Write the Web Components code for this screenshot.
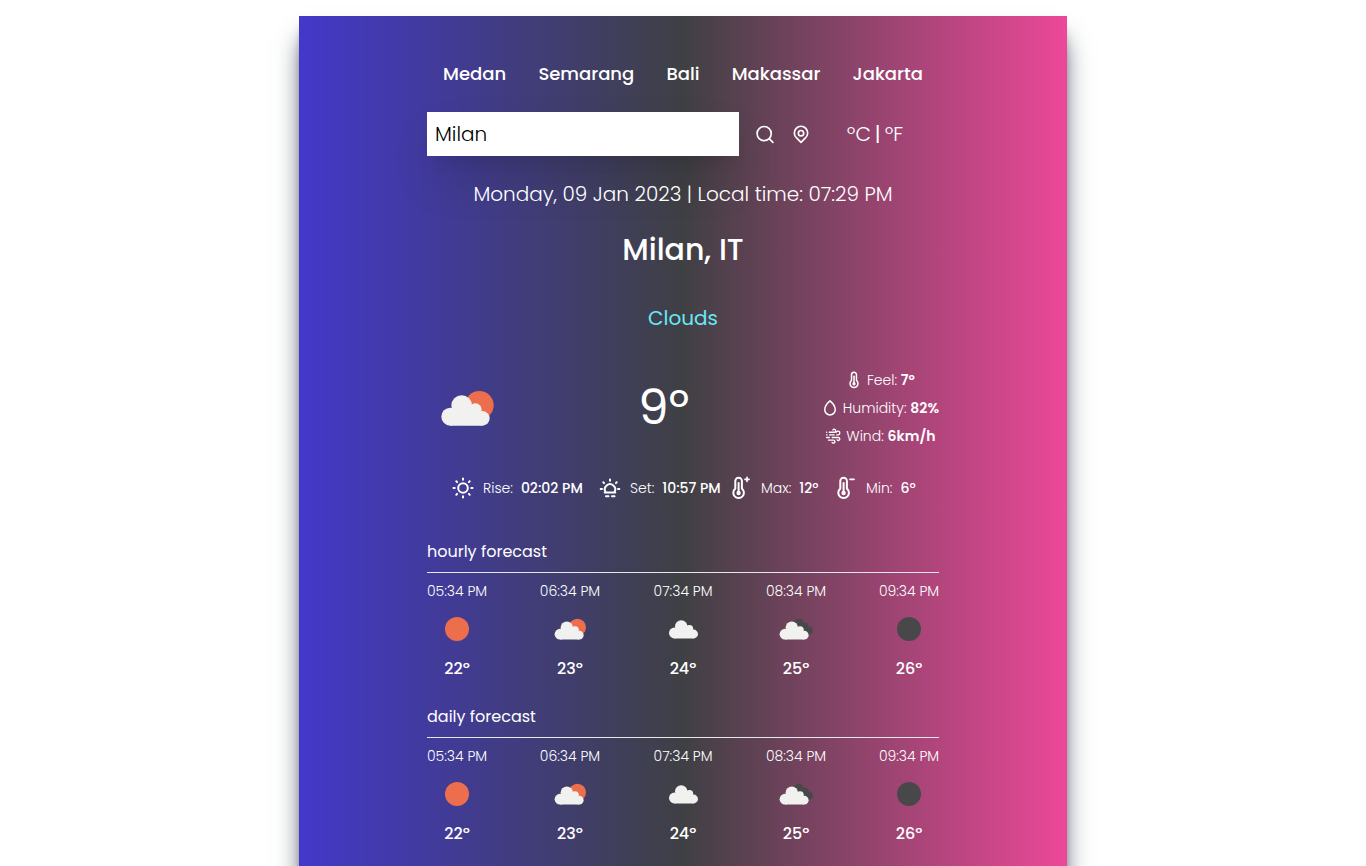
<!DOCTYPE html>
<html lang="en">
<head>
<meta charset="utf-8">
<meta name="viewport" content="width=device-width, initial-scale=1">
<title>Weather</title>
<style>
  body { margin: 0; background: #fff; color: #fff; font: 400 14px/20px Poppins, Inter, sans-serif; overflow-x: hidden; }
</style>
</head>
<body>
<weather-app></weather-app>
<script>
const define = (name, html, setup) => {
  const template = document.createElement('template');
  template.innerHTML = html;
  customElements.define(name, class extends HTMLElement {
    constructor() {
      super();
      this.attachShadow({ mode: 'open' }).append(template.content.cloneNode(true));
    }
    connectedCallback() { if (setup) setup(this, this.shadowRoot); }
  });
};

const thermo = '<path d="M6.3 12.600V5a3.300 3.300 0 0 1 6.600 0v7.600a5.300 5.300 0 1 1-6.600 0z"/><path d="M9.600 7v9"/><circle cx="9.600" cy="17" r="1.200"/>';
const lineIcons = {
  search: '<circle cx="11" cy="11.500" r="8.500"/><path d="M17.300 17.800l4.200 4.200"/>',
  pin: '<path d="M12 22l-5.300-5.300a8 8 0 1 1 10.600 0z"/><circle cx="12" cy="11" r="3.200"/>',
  feel: '<g transform="translate(2.400 0)">' + thermo + '</g>',
  drop: '<path d="M12 2.500C8.500 5.500 5 9.800 5 14.200a7 7 0 0 0 14 0C19 9.800 15.500 5.500 12 2.500z"/>',
  wind: '<g stroke-width="1.800"><path d="M7 7h6.500a2 2 0 1 0-1.700-3M17 10.500h1.500a2.500 2.500 0 1 0-2.200-3.500M7.500 10.500h6M11 14h8a2 2 0 1 1-1.700 3M6 17.500h6.500a2 2 0 1 1-1.700 3M3.500 7h.1M3.500 10.500h.5M3.500 14h3.500"/></g>',
  sun: '<circle cx="12" cy="12" r="4.800"/><path d="M12 2.500v1.200M12 20.300v1.200M2.500 12h1.200M20.300 12h1.200M5.300 5.300l.8.8M17.900 17.900l.8.8M5.300 18.700l.8-.8M17.900 6.100l.8-.8"/>',
  sunset: '<path d="M7.500 16a5.200 5.200 0 1 1 9 0M6.700 16.500h10.600M8 20.300h2.500M14 20.300h2.500M12 3.500v1.200M5.300 6.300l.8.8M18.700 6.300l-.8.8M2.700 13h1.300M20 13h1.300"/>',
  max: thermo + '<path stroke-width="1.700" d="M18 1.300v4M16 3.300h4"/>',
  min: thermo + '<path stroke-width="1.700" d="M16 3.300h4"/>'
};
define('line-icon', `
  <style>
    :host { display: block; flex: none; width: var(--size, 18px); height: var(--size, 18px); }
    svg { display: block; width: 100%; height: 100%; fill: none; stroke: currentColor; stroke-width: 2; stroke-linecap: round; stroke-linejoin: round; }
  </style><svg viewBox="0 0 24 24" aria-hidden="true"></svg>`,
  (el, root) => { root.querySelector('svg').innerHTML = lineIcons[el.getAttribute('name')] || ''; });

const cloud = '<g fill="#f1f1f0"><circle cx="70" cy="146" r="27"/><circle cx="104" cy="113" r="31"/><circle cx="145" cy="125" r="19"/><circle cx="166" cy="151" r="22"/><path d="M70 140l34-22h41l21 30v25H70z"/></g>';
const skyArt = {
  clear: '<circle cx="120" cy="120" r="60" fill="#ec6e4c"/>',
  night: '<circle cx="120" cy="120" r="60" fill="#48484a"/>',
  few: '<circle cx="157" cy="112" r="43" fill="#ec6e4c"/>' + cloud,
  cloud: '<g transform="translate(7 -6)">' + cloud + '</g>',
  broken: '<g fill="#48484a"><circle cx="134" cy="94" r="25"/><circle cx="165" cy="106" r="17"/><circle cx="184" cy="128" r="20"/><path d="M134 94h31l19 54h-50z"/></g><g transform="translate(-5 0)">' + cloud + '</g>'
};
define('sky-icon', `
  <style>
    :host { display: block; flex: none; width: var(--size, 48px); height: var(--size, 48px); }
    svg { display: block; width: 100%; height: 100%; }
  </style><svg viewBox="0 0 240 240" aria-hidden="true"></svg>`,
  (el, root) => { root.querySelector('svg').innerHTML = skyArt[el.getAttribute('name')] || ''; });

define('city-nav', `
  <style>
    :host { display: block; }
    nav { display: flex; justify-content: space-around; }
    button { font: 500 18px/28px Poppins, Inter, sans-serif; color: inherit; background: none; border: 0; padding: 0; cursor: pointer; }
  </style>
  <nav><button>Medan</button><button>Semarang</button><button>Bali</button><button>Makassar</button><button>Jakarta</button></nav>`);

define('search-bar', `
  <style>
    :host { display: flex; --size: 20px; }
    form { flex: 3; min-width: 0; display: flex; align-items: center; gap: 16px; }
    input { flex: 1; min-width: 0; box-sizing: border-box; height: 44px; padding: 8px; border: 0; border-radius: 0; outline: 0; background: #fff; color: #000;
      font: 300 20px/28px Poppins, Inter, sans-serif; box-shadow: 0 25px 50px -12px rgb(0 0 0 / .25), 0 12px 16px -8px rgb(0 0 0 / .1); }
    button { font: inherit; color: inherit; background: none; border: 0; padding: 0; cursor: pointer; }
    .units { flex: 1; min-width: 0; display: flex; align-items: center; justify-content: center; gap: 4px; font: 300 20px/28px Poppins, Inter, sans-serif; }
    .units span { font-weight: 400; }
  </style>
  <form>
    <input type="text" aria-label="Search for city" value="Milan">
    <button type="button" aria-label="Search"><line-icon name="search"></line-icon></button>
    <button type="button" aria-label="Use my location"><line-icon name="pin"></line-icon></button>
  </form>
  <div class="units"><button>ºC</button><span>|</span><button>ºF</button></div>`);

define('weather-stat', `
  <style>
    :host { display: flex; align-items: center; white-space: nowrap; font-weight: 300; gap: var(--gap, 4px); }
    ::slotted(b) { font-weight: 500; }
  </style>
  <line-icon></line-icon><slot></slot>`,
  (el, root) => {
    const icon = document.createElement('line-icon');
    icon.setAttribute('name', el.getAttribute('icon'));
    root.querySelector('line-icon').replaceWith(icon);
  });

define('current-weather', `
  <style>
    :host { display: block; text-align: center; }
    p, h1 { margin: 0; }
    .date { font: 300 20px/28px Poppins, Inter, sans-serif; }
    h1 { margin-top: 24px; font: 500 30px/36px Poppins, Inter, sans-serif; }
    .sky { margin-top: 36px; color: #67e8f9; font: 400 20px/28px Poppins, Inter, sans-serif; }
    .now { display: flex; align-items: center; justify-content: space-between; margin-top: 36px; }
    .now sky-icon { --size: 80px; }
    .temp { font: 400 48px/48px Poppins, Inter, sans-serif; }
    .stats { display: flex; flex-direction: column; align-items: center; gap: 8px; }
    .stats b { font-weight: 600; }
    .extra { display: grid; grid-template-columns: 147px 131px 105px 81px; justify-content: center; margin-top: 28px; --size: 24px; --gap: 8px; }
  </style>
  <p class="date">Monday, 09 Jan 2023 | Local time: 07:29 PM</p>
  <h1>Milan, IT</h1>
  <p class="sky">Clouds</p>
  <div class="now">
    <sky-icon name="few"></sky-icon>
    <p class="temp">9º</p>
    <div class="stats">
      <weather-stat icon="feel"><span>Feel: <b>7º</b></span></weather-stat>
      <weather-stat icon="drop"><span>Humidity: <b>82%</b></span></weather-stat>
      <weather-stat icon="wind"><span>Wind: <b>6km/h</b></span></weather-stat>
    </div>
  </div>
  <div class="extra">
    <weather-stat icon="sun"><span>Rise:</span><b>02:02 PM</b></weather-stat>
    <weather-stat icon="sunset"><span>Set:</span><b>10:57 PM</b></weather-stat>
    <weather-stat icon="max"><span>Max:</span><b>12º</b></weather-stat>
    <weather-stat icon="min"><span>Min:</span><b>6º</b></weather-stat>
  </div>`);

define('forecast-item', `
  <style>
    :host { display: flex; flex-direction: column; align-items: center; width: 60px; white-space: nowrap; }
    .time { font: 300 14px/20px Poppins, Inter, sans-serif; }
    sky-icon { margin: 4px 0; }
    .temp { font: 500 16px/24px Poppins, Inter, sans-serif; }
  </style>
  <span class="time"><slot name="time"></slot></span>
  <sky-icon></sky-icon>
  <span class="temp"><slot></slot></span>`,
  (el, root) => {
    const icon = document.createElement('sky-icon');
    icon.setAttribute('name', el.getAttribute('sky'));
    root.querySelector('sky-icon').replaceWith(icon);
  });

define('forecast-panel', `
  <style>
    :host { display: block; }
    h2 { margin: 0; font: 400 16px/24px Poppins, Inter, sans-serif; }
    hr { height: 1px; border: 0; margin: 8px 0; background: #e5e7eb; }
    .row { display: flex; justify-content: space-between; }
  </style>
  <h2><slot></slot></h2>
  <hr>
  <div class="row">
    <forecast-item sky="clear"><span slot="time">05:34 PM</span>22º</forecast-item>
    <forecast-item sky="few"><span slot="time">06:34 PM</span>23º</forecast-item>
    <forecast-item sky="cloud"><span slot="time">07:34 PM</span>24º</forecast-item>
    <forecast-item sky="broken"><span slot="time">08:34 PM</span>25º</forecast-item>
    <forecast-item sky="night"><span slot="time">09:34 PM</span>26º</forecast-item>
  </div>`);

define('weather-app', `
  <style>
    :host { display: flow-root; }
    main { box-sizing: border-box; max-width: 768px; margin: 16px auto 0; padding: 44px 128px 40px;
      background: linear-gradient(to right, #4338ca, #3f4044, #ec4899); box-shadow: 0 20px 25px -5px #374151, 0 8px 10px -6px #374151; }
    search-bar, current-weather { margin-top: 24px; }
    forecast-panel { margin-top: 24px; }
    forecast-panel.first { margin-top: 40px; }
  </style>
  <main>
    <city-nav></city-nav>
    <search-bar></search-bar>
    <current-weather></current-weather>
    <forecast-panel class="first">hourly forecast</forecast-panel>
    <forecast-panel>daily forecast</forecast-panel>
  </main>`);
</script>
</body>
</html>
